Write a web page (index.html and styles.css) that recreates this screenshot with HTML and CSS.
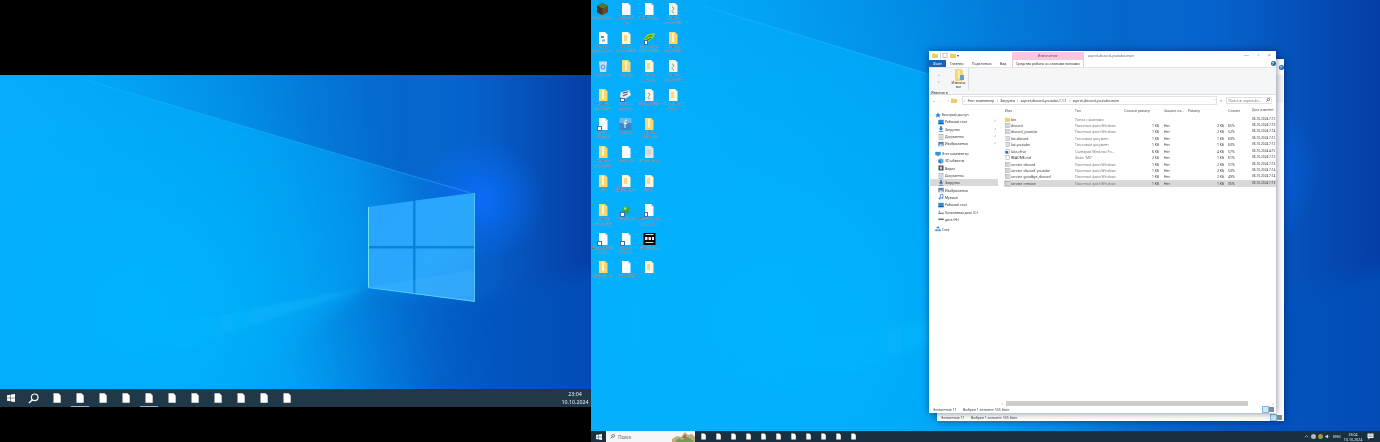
FILE: index.html
```html
<!DOCTYPE html>
<html lang="ru">
<head>
    <meta charset="UTF-8">
    <meta name="viewport" content="width=device-width, initial-scale=1.0">
    <title>Рабочие столы</title>
    <link rel="stylesheet" href="styles.css">
</head>
<body>
    <svg class="defs" width="0" height="0">
        <defs>
            <linearGradient id="g-base" x1="0" y1="0" x2="1" y2="0">
                <stop offset="0" stop-color="#07acfb"/>
                <stop offset="0.4" stop-color="#009df2"/>
                <stop offset="0.6" stop-color="#0488e6"/>
                <stop offset="0.78" stop-color="#0665cf"/>
                <stop offset="1" stop-color="#053ea6"/>
            </linearGradient>
            <radialGradient id="g-cyan" gradientUnits="userSpaceOnUse" cx="150" cy="235" r="300">
                <stop offset="0" stop-color="#00b6ff" stop-opacity="0.9"/>
                <stop offset="1" stop-color="#00b6ff" stop-opacity="0"/>
            </radialGradient>
            <radialGradient id="g-glow" gradientUnits="userSpaceOnUse" cx="482" cy="125" r="62">
                <stop offset="0" stop-color="#0a6cf6" stop-opacity="1"/>
                <stop offset="1" stop-color="#0a6cf6" stop-opacity="0"/>
            </radialGradient>
            <linearGradient id="g-upper" gradientUnits="userSpaceOnUse" x1="84" y1="0" x2="510" y2="0">
                <stop offset="0" stop-color="#0560c8" stop-opacity="0"/>
                <stop offset="0.4" stop-color="#0560c8" stop-opacity="0.35"/>
                <stop offset="0.75" stop-color="#0560c8" stop-opacity="0.75"/>
                <stop offset="1" stop-color="#0560c8" stop-opacity="0"/>
            </linearGradient>
            <linearGradient id="g-lower" gradientUnits="userSpaceOnUse" x1="300" y1="314" x2="500" y2="225">
                <stop offset="0" stop-color="#0552bc" stop-opacity="0"/>
                <stop offset="1" stop-color="#0552bc" stop-opacity="0.7"/>
            </linearGradient>
            <linearGradient id="g-beam" gradientUnits="userSpaceOnUse" x1="100" y1="0" x2="368" y2="0">
                <stop offset="0" stop-color="#19c3ff" stop-opacity="0"/>
                <stop offset="1" stop-color="#19c3ff" stop-opacity="0.4"/>
            </linearGradient>
            <linearGradient id="g-pane" gradientUnits="userSpaceOnUse" x1="368" y1="120" x2="475" y2="225">
                <stop offset="0" stop-color="#2aa4ff"/>
                <stop offset="0.6" stop-color="#2aa8fc"/>
                <stop offset="1" stop-color="#2c9df5"/>
            </linearGradient>
            <filter id="f-soft" filterUnits="userSpaceOnUse" x="-50" y="-50" width="700" height="420">
                <feGaussianBlur stdDeviation="7"/>
            </filter>
            <filter id="f-beam" filterUnits="userSpaceOnUse" x="-50" y="-50" width="700" height="420">
                <feGaussianBlur stdDeviation="2.500"/>
            </filter>
            <symbol id="wall" viewBox="0 0 591 314" preserveAspectRatio="none">
                <rect width="591" height="314" fill="url(#g-base)"/>
                <rect width="591" height="314" fill="url(#g-cyan)"/>
                <polygon points="84,4 470,118 510,118 510,-10 84,-10" fill="url(#g-upper)"/>
                <polygon points="200,330 368,212 470,227 620,190 620,330" fill="url(#g-lower)" filter="url(#f-soft)"/>
                <rect width="591" height="314" fill="url(#g-glow)"/>
                <polygon points="84,4 470,117 470,118.500 84,5" fill="#27b3ff" opacity="0.4"/>
                <polygon points="368,212 100,262 190,272" fill="url(#g-beam)" filter="url(#f-beam)"/>
                <polygon points="368,132 475,117.700 475,226.700 368,212" fill="#0c82dc"/>
                <g fill="url(#g-pane)">
                    <polygon points="368,132 413,126 413,171 368,171"/>
                    <polygon points="415.500,125.500 475,117.700 475,171 415.500,171"/>
                    <polygon points="368,173.500 413,173.500 413,218.500 368,212"/>
                    <polygon points="415.500,173.500 475,173.500 475,226.700 415.500,219"/>
                </g>
                <polygon points="368,212 475,195 475,226.700 415.500,219" fill="#4fc3ff" opacity="0.18"/>
                <polygon points="368,132 369,132 369,212 368,212" fill="#6be4ff"/>
                <polygon points="368,212 475,226 475,227 368,213" fill="#63d8ff" opacity="0.8"/>
                <polygon points="474,118 475,118 475,227 474,227" fill="#5cc8ff" opacity="0.8"/>
            </symbol>
            <symbol id="tb-doc" viewBox="0 0 8 10">
                <path d="M0.500 0.300H5.500L7.700 2.500V9.700H0.500Z" fill="#fff"/>
            </symbol>
            <symbol id="i-doc" viewBox="0 0 10 12">
                <path d="M1 0H7L9.500 2.500V12H1Z" fill="#fdfdfd"/>
                <path d="M7 0V2.500H9.500Z" fill="#cfd8e0"/>
            </symbol>
            <symbol id="i-pale" viewBox="0 0 10 12">
                <path d="M1 0H7L9.500 2.500V12H1Z" fill="#fff6d8"/>
                <rect x="3" y="3" width="3" height="6" fill="#f3d98a"/>
            </symbol>
            <symbol id="i-yellow" viewBox="0 0 10 12">
                <path d="M1 0H7L9.500 2.500V12H1Z" fill="#f6d873"/>
                <rect x="4" y="1" width="2" height="9" fill="#fff4c8"/>
            </symbol>
            <symbol id="i-pic" viewBox="0 0 10 12">
                <path d="M1 0H7L9.500 2.500V12H1Z" fill="#f9f2df"/>
                <path d="M4 4C6 4 6 6 5 7S3 9 6 10" stroke="#6b9fcf" fill="none"/>
            </symbol>
            <symbol id="i-setup" viewBox="0 0 10 12">
                <path d="M1 0H7L9.500 2.500V12H1Z" fill="#fbfdff"/>
                <rect x="3" y="4" width="3" height="2" fill="#4f9be0"/>
                <rect x="4" y="7.500" width="3" height="2" fill="#7db4e6"/>
            </symbol>
            <symbol id="i-gray" viewBox="0 0 10 12">
                <path d="M1 0H7L9.500 2.500V12H1Z" fill="#dfe3e6"/>
                <path d="M3 4H7M3 6H7M3 8H7" stroke="#b5bcc2" stroke-width="0.800"/>
            </symbol>
            <symbol id="i-mine" viewBox="0 0 12 12">
                <path d="M6 0L11.500 2.800V9.200L6 12L0.500 9.200V2.800Z" fill="#6b4a2c"/>
                <path d="M6 0L11.500 2.800L6 5.600L0.500 2.800Z" fill="#4d7a33"/>
                <path d="M6 5.600V12L0.500 9.200V2.800Z" fill="#4b3320"/>
            </symbol>
            <symbol id="i-green" viewBox="0 0 14 12">
                <path d="M1 7L5 2L13 1L11 6L5 10Z" fill="#9bd32c"/>
                <path d="M3 7L6 4L10 3.500M4 8.500L9 6" stroke="#1d6a17" fill="none"/>
            </symbol>
            <symbol id="i-bin" viewBox="0 0 10 12">
                <path d="M1 1.500H9L8 12H2Z" fill="#c9dff0"/>
                <circle cx="5" cy="7" r="2" fill="none" stroke="#3f8fd0"/>
            </symbol>
            <symbol id="i-pad" viewBox="0 0 14 12">
                <path d="M2 3L11 0.500L13 6L5 11L1 8Z" fill="#e8eaee"/>
                <path d="M4 4L10 2.500M4 7L9 5" stroke="#555c66" stroke-width="1.200"/>
            </symbol>
            <symbol id="i-f" viewBox="0 0 12 12">
                <rect width="12" height="12" fill="#3d86c9"/>
                <rect width="12" height="5" fill="#7ab4e4"/>
                <path d="M7.500 2C5.500 2 5.500 3.500 5.500 5V10M4 5.500H7.500" stroke="#eef7ff" fill="none"/>
            </symbol>
            <symbol id="i-ball" viewBox="0 0 10 10">
                <circle cx="5" cy="5" r="3.600" fill="#3da53a"/>
                <circle cx="4.200" cy="3.600" r="1.300" fill="#a4e27e"/>
            </symbol>
            <symbol id="i-black" viewBox="0 0 12 12">
                <rect width="12" height="12" fill="#050505"/>
                <rect x="1.500" y="4" width="2.500" height="3" fill="#e8e8e8"/>
                <rect x="5" y="4" width="2.500" height="3" fill="#e8e8e8"/>
                <rect x="8.500" y="4" width="2" height="3" fill="#e8e8e8"/>
                <path d="M2 1.500H10M2 9.500H10" stroke="#d8d8d8"/>
            </symbol>
            <symbol id="f-folder" viewBox="0 0 6 5">
                <path d="M0 0.500H2.400L3 1.100H6V5H0Z" fill="#f1cd68"/>
            </symbol>
            <symbol id="f-bat" viewBox="0 0 6 5">
                <rect x="0.300" y="0.300" width="5.400" height="4.400" fill="#f4f5f6" stroke="#8a9198" stroke-width="0.500"/>
                <path d="M1 1.800H5M1 3.200H5" stroke="#8d9aa5" stroke-width="0.600"/>
            </symbol>
            <symbol id="f-txt" viewBox="0 0 6 5">
                <rect x="1" y="0.200" width="4" height="4.600" fill="#fff" stroke="#8a9198" stroke-width="0.500"/>
                <path d="M1.800 1.500H4.200M1.800 2.600H4.200M1.800 3.700H4.200" stroke="#6e9bc4" stroke-width="0.400"/>
            </symbol>
            <symbol id="f-ps" viewBox="0 0 6 5">
                <rect x="1" y="0.200" width="4" height="4.600" fill="#fff" stroke="#8a9198" stroke-width="0.500"/>
                <rect x="0.500" y="2" width="3" height="2.600" fill="#2f6fb3"/>
            </symbol>
            <symbol id="f-blank" viewBox="0 0 6 5">
                <rect x="1" y="0.200" width="4" height="4.600" fill="#fff" stroke="#8a9198" stroke-width="0.500"/>
            </symbol>
            <symbol id="n-star" viewBox="0 0 6 6">
                <path d="M3 0.300L3.800 2.200L5.800 2.400L4.300 3.700L4.800 5.700L3 4.600L1.200 5.700L1.700 3.700L0.200 2.400L2.200 2.200Z" fill="#2f7fd0"/>
            </symbol>
            <symbol id="n-desk" viewBox="0 0 6 6">
                <rect x="0.300" y="0.800" width="5.400" height="4.400" fill="#2f8ad8"/>
                <rect x="0.300" y="4.200" width="5.400" height="1" fill="#145a9c"/>
            </symbol>
            <symbol id="n-down" viewBox="0 0 6 6">
                <path d="M2 0.300H4V2.500H5.500L3 4.700L0.500 2.500H2Z" fill="#2f80cf"/>
                <rect x="0.800" y="5" width="4.400" height="0.800" fill="#5d7f9e"/>
            </symbol>
            <symbol id="n-doc" viewBox="0 0 6 6">
                <rect x="1" y="0.300" width="4" height="5.400" fill="#f4f6f8" stroke="#7f8a94" stroke-width="0.500"/>
                <path d="M2 2H4M2 3H4M2 4H4" stroke="#8a97a2" stroke-width="0.400"/>
            </symbol>
            <symbol id="n-pic" viewBox="0 0 6 6">
                <rect x="0.300" y="0.800" width="5.400" height="4.400" fill="#5f87ad"/>
                <path d="M0.800 4.800L2.500 2.800L3.800 4L4.500 3.300L5.300 4.800Z" fill="#dceaf5"/>
            </symbol>
            <symbol id="n-pc" viewBox="0 0 7 6">
                <rect x="0.300" y="0.500" width="6.400" height="3.800" fill="#2b97df"/>
                <rect x="2" y="4.500" width="3" height="1" fill="#6d8599"/>
            </symbol>
            <symbol id="n-cube" viewBox="0 0 6 6">
                <path d="M3 0.300L5.500 1.500V4.500L3 5.700L0.500 4.500V1.500Z" fill="#5ab0e6"/>
                <path d="M3 2.800V5.700L0.500 4.500V1.500Z" fill="#2d82c3"/>
            </symbol>
            <symbol id="n-video" viewBox="0 0 6 6">
                <rect x="0.500" y="0.500" width="5" height="5" fill="#3a424a"/>
                <rect x="1.800" y="1.500" width="2.400" height="3" fill="#c6ccd2"/>
            </symbol>
            <symbol id="n-music" viewBox="0 0 6 6">
                <path d="M2.300 4.300V0.800L5 0.300V3.600" stroke="#2e7ec7" stroke-width="0.700" fill="none"/>
                <circle cx="1.600" cy="4.500" r="0.900" fill="#2e7ec7"/>
                <circle cx="4.300" cy="3.900" r="0.900" fill="#2e7ec7"/>
            </symbol>
            <symbol id="n-disk" viewBox="0 0 7 6">
                <path d="M1 0.800L2.500 2.500L1 4Z" fill="#3b93d9"/>
                <rect x="0.300" y="3.800" width="6.400" height="1.600" fill="#7d8a95"/>
            </symbol>
            <symbol id="n-drive" viewBox="0 0 7 6">
                <rect x="0.300" y="2.500" width="6.400" height="1.500" fill="#545c64"/>
            </symbol>
            <symbol id="n-net" viewBox="0 0 7 6">
                <rect x="2" y="0.300" width="3" height="2" fill="#2f8ad8"/>
                <rect x="0.300" y="3.500" width="2.800" height="2" fill="#2f8ad8"/>
                <rect x="3.900" y="3.500" width="2.800" height="2" fill="#2f8ad8"/>
            </symbol>
        </defs>
    </svg>

    <div class="stage">
        <section class="screen screen-left">
            <div class="desk desk-left">
                <svg class="wallpaper"><use href="#wall"/></svg>
            </div>
            <div class="taskbar taskbar-big">
                <div class="tb-start">
                    <svg viewBox="0 0 8 8" width="8" height="8"><path d="M0 1.200L3.500 0.700V3.800H0ZM4 0.600L8 0V3.800H4ZM0 4.200H3.500V7.300L0 6.800ZM4 4.200H8V8L4 7.400Z" fill="#fff"/></svg>
                </div>
                <div class="tb-search">
                    <svg viewBox="0 0 12 12" width="11" height="11"><circle cx="7.300" cy="4.700" r="3.600" fill="none" stroke="#fff" stroke-width="1.300"/><path d="M4.800 7.300L1 11" stroke="#fff" stroke-width="1.500"/></svg>
                </div>
                <div class="tb-item"><svg><use href="#tb-doc"/></svg></div>
                <div class="tb-item is-open"><svg><use href="#tb-doc"/></svg></div>
                <div class="tb-item"><svg><use href="#tb-doc"/></svg></div>
                <div class="tb-item"><svg><use href="#tb-doc"/></svg></div>
                <div class="tb-item is-open"><svg><use href="#tb-doc"/></svg></div>
                <div class="tb-item"><svg><use href="#tb-doc"/></svg></div>
                <div class="tb-item"><svg><use href="#tb-doc"/></svg></div>
                <div class="tb-item"><svg><use href="#tb-doc"/></svg></div>
                <div class="tb-item"><svg><use href="#tb-doc"/></svg></div>
                <div class="tb-item"><svg><use href="#tb-doc"/></svg></div>
                <div class="tb-item"><svg><use href="#tb-doc"/></svg></div>
                <div class="tb-clock">
                    <span>23:04</span>
                    <span>10.10.2024</span>
                </div>
            </div>
        </section>

        <section class="screen screen-right">
            <div class="desk desk-right">
                <svg class="wallpaper"><use href="#wall"/></svg>

                <div class="icons">
                    <div class="icon"><svg class="big"><use href="#i-mine"/></svg><span>Скрафтинг</span></div>
                    <div class="icon"><svg><use href="#i-doc"/></svg><span>Рабочий ф...</span></div>
                    <div class="icon"><svg><use href="#i-doc"/></svg><span>Новый д...</span></div>
                    <div class="icon"><svg><use href="#i-pic"/></svg><span>Новая папка (3)</span></div>

                    <div class="icon"><svg><use href="#i-setup"/></svg><span>Новый документ...</span></div>
                    <div class="icon"><svg><use href="#i-pale"/></svg><span>Новая папка (15)</span></div>
                    <div class="icon sc"><svg class="big"><use href="#i-green"/></svg><span>Tlauncher Cube 2021</span></div>
                    <div class="icon"><svg><use href="#i-yellow"/></svg><span>Новая папка (6)</span></div>

                    <div class="icon"><svg><use href="#i-bin"/></svg><span>Корзина</span></div>
                    <div class="icon"><svg><use href="#i-yellow"/></svg><span>ноутбук</span></div>
                    <div class="icon"><svg><use href="#i-pale"/></svg><span>Новая папка</span></div>
                    <div class="icon"><svg><use href="#i-pic"/></svg><span>Новая папка (2)</span></div>

                    <div class="icon"><svg><use href="#i-yellow"/></svg><span>Новая папка (4)</span></div>
                    <div class="icon sc"><svg class="big"><use href="#i-pad"/></svg><span>Отчёт - кратко</span></div>
                    <div class="icon"><svg><use href="#i-pic"/></svg><span>Diary 2023</span></div>
                    <div class="icon"><svg><use href="#i-pale"/></svg><span>Текстовый файл</span></div>

                    <div class="icon sc"><svg><use href="#i-doc"/></svg><span>Сеть Discord</span></div>
                    <div class="icon"><svg class="big"><use href="#i-f"/></svg><span>Paint.F</span></div>
                    <div class="icon icon-end"><svg><use href="#i-yellow"/></svg><span>Новая папка (5)</span></div>

                    <div class="icon"><svg><use href="#i-yellow"/></svg><span>Новая папка (7)</span></div>
                    <div class="icon"><svg><use href="#i-doc"/></svg><span>Файл 32</span></div>
                    <div class="icon icon-end"><svg><use href="#i-gray"/></svg><span>Диспетчер</span></div>

                    <div class="icon"><svg><use href="#i-yellow"/></svg><span>12</span></div>
                    <div class="icon"><svg><use href="#i-pale"/></svg><span>ДИП-Н.doc</span></div>
                    <div class="icon icon-end"><svg><use href="#i-pale"/></svg><span>Софт</span></div>

                    <div class="icon"><svg><use href="#i-yellow"/></svg><span>Новая папка (8)</span></div>
                    <div class="icon sc"><svg class="small"><use href="#i-ball"/></svg><span>BlueStack</span></div>
                    <div class="icon sc icon-end"><svg><use href="#i-doc"/></svg><span>Мессенджер Telegram</span></div>

                    <div class="icon sc"><svg><use href="#i-doc"/></svg><span>Adobe Flash Player</span></div>
                    <div class="icon sc"><svg><use href="#i-doc"/></svg><span>Steam Games</span></div>
                    <div class="icon icon-end"><svg class="big"><use href="#i-black"/></svg><span>Bandicam</span></div>

                    <div class="icon"><svg><use href="#i-yellow"/></svg><span>CubeCraft</span></div>
                    <div class="icon"><svg><use href="#i-doc"/></svg><span>Kara-Rk21</span></div>
                    <div class="icon icon-end"><svg><use href="#i-pale"/></svg><span>1</span></div>
                </div>

                <!-- second explorer window, only its edge is visible -->
                <div class="window window-back">
                    <div class="back-top"><span class="help">?</span></div>
                    <div class="back-ribbon"></div>
                    <div class="back-fill"></div>
                    <div class="status">
                        <span class="status-count">Элементов: 11</span>
                        <span>Выбран 1 элемент: 555 байт</span>
                        <span class="status-views"><i class="on"></i><i></i></span>
                    </div>
                </div>

                <div class="window window-front">
                    <div class="titlebar">
                        <div class="qat">
                            <svg viewBox="0 0 6 5" width="6" height="5"><use href="#f-folder"/></svg>
                            <i class="qat-sep"></i>
                            <svg viewBox="0 0 6 5" width="6" height="5"><use href="#f-blank"/></svg>
                            <svg viewBox="0 0 6 5" width="6" height="5"><use href="#f-folder"/></svg>
                            <span class="qat-arrow">▾</span>
                        </div>
                        <div class="tool-title">Извлечение</div>
                        <div class="win-title">zapret-discord-youtube-main</div>
                        <div class="win-btns"><span>—</span><span>▫</span><span>×</span></div>
                    </div>
                    <div class="tabs">
                        <span class="tab tab-file">Файл</span>
                        <span class="tab tab-home">Главная</span>
                        <span class="tab tab-share">Поделиться</span>
                        <span class="tab tab-view">Вид</span>
                        <span class="tab tab-tools">Средства работы со сжатыми папками</span>
                        <span class="tabs-end"><span class="caret">˄</span><span class="help">?</span></span>
                    </div>
                    <div class="ribbon">
                        <div class="ribbon-group">
                            <div class="ribbon-small">
                                <span class="arrow-up">▴</span>
                                <span class="arrow-up">▾</span>
                            </div>
                            <div class="ribbon-big">
                                <svg viewBox="0 0 10 12" width="10" height="12"><path d="M1 0H7L9 2V12H1Z" fill="#f5d672"/><rect x="4" y="1" width="1.500" height="8" fill="#fff3c2"/><rect x="6" y="6" width="4" height="5" fill="#5f9fd6"/></svg>
                                <span>Извлечь<br>все</span>
                            </div>
                        </div>
                        <div class="ribbon-label">Извлечь в</div>
                    </div>
                    <div class="addr">
                        <div class="nav">
                            <span>←</span>
                            <span class="dim">→</span>
                            <span class="dim">˅</span>
                            <span>↑</span>
                            <svg viewBox="0 0 6 5" width="6" height="5"><use href="#f-folder"/></svg>
                        </div>
                        <div class="path">
                            <span>›</span><span>Этот компьютер</span>
                            <span>›</span><span>Загрузки</span>
                            <span>›</span><span>zapret-discord-youtube-1.1.1</span>
                            <span>›</span><span>zapret-discord-youtube-main</span>
                            <span class="path-end">˅</span>
                        </div>
                        <div class="refresh">↻</div>
                        <div class="search">
                            <span>Поиск в: zapret-dis...</span>
                            <svg viewBox="0 0 6 6" width="4" height="4"><circle cx="3.800" cy="2.200" r="1.700" fill="none" stroke="#444"/><path d="M2.600 3.400L0.500 5.500" stroke="#444"/></svg>
                        </div>
                    </div>
                    <div class="main">
                        <nav class="sidebar">
                            <div class="nav-row top"><svg><use href="#n-star"/></svg>Быстрый доступ</div>
                            <div class="nav-row"><svg><use href="#n-desk"/></svg>Рабочий стол<b>✓</b></div>
                            <div class="nav-row"><svg><use href="#n-down"/></svg>Загрузки<b>✓</b></div>
                            <div class="nav-row"><svg><use href="#n-doc"/></svg>Документы<b>✓</b></div>
                            <div class="nav-row"><svg><use href="#n-pic"/></svg>Изображения<b>✓</b></div>
                            <div class="nav-row top group"><svg><use href="#n-pc"/></svg>Этот компьютер</div>
                            <div class="nav-row"><svg><use href="#n-cube"/></svg>3D-объекты</div>
                            <div class="nav-row"><svg><use href="#n-video"/></svg>Видео</div>
                            <div class="nav-row"><svg><use href="#n-doc"/></svg>Документы</div>
                            <div class="nav-row selected"><svg><use href="#n-down"/></svg>Загрузки</div>
                            <div class="nav-row"><svg><use href="#n-pic"/></svg>Изображения</div>
                            <div class="nav-row"><svg><use href="#n-music"/></svg>Музыка</div>
                            <div class="nav-row"><svg><use href="#n-desk"/></svg>Рабочий стол</div>
                            <div class="nav-row"><svg><use href="#n-disk"/></svg>Локальный диск (C:)</div>
                            <div class="nav-row"><svg><use href="#n-drive"/></svg>диск (H:)</div>
                            <div class="nav-row top group"><svg><use href="#n-net"/></svg>Сеть</div>
                        </nav>
                        <div class="list">
                            <div class="row head">
                                <span class="c-name">Имя</span>
                                <span>Тип</span>
                                <span class="c-hsize">Сжатый размер</span>
                                <span>Защита па...</span>
                                <span>Размер</span>
                                <span>Сжатие</span>
                                <span>Дата изменен</span>
                            </div>
                            <div class="row"><span class="c-name"><svg><use href="#f-folder"/></svg>bin</span><span class="c-type">Папка с файлами</span><span></span><span></span><span></span><span></span><span>06.10.2024 7:12</span></div>
                            <div class="row"><span class="c-name"><svg><use href="#f-bat"/></svg>discord</span><span class="c-type">Пакетный файл Windows</span><span class="c-csize">1 КБ</span><span>Нет</span><span class="c-size">2 КБ</span><span>65%</span><span>06.10.2024 7:13</span></div>
                            <div class="row"><span class="c-name"><svg><use href="#f-bat"/></svg>discord_youtube</span><span class="c-type">Пакетный файл Windows</span><span class="c-csize">1 КБ</span><span>Нет</span><span class="c-size">2 КБ</span><span>52%</span><span>06.10.2024 7:14</span></div>
                            <div class="row"><span class="c-name"><svg><use href="#f-txt"/></svg>list-discord</span><span class="c-type">Текстовый документ</span><span class="c-csize">1 КБ</span><span>Нет</span><span class="c-size">1 КБ</span><span>63%</span><span>06.10.2024 7:12</span></div>
                            <div class="row"><span class="c-name"><svg><use href="#f-txt"/></svg>list-youtube</span><span class="c-type">Текстовый документ</span><span class="c-csize">1 КБ</span><span>Нет</span><span class="c-size">1 КБ</span><span>63%</span><span>06.10.2024 7:12</span></div>
                            <div class="row"><span class="c-name"><svg><use href="#f-ps"/></svg>lukr-cfrse</span><span class="c-type">Сценарий Windows Po...</span><span class="c-csize">6 КБ</span><span>Нет</span><span class="c-size">4 КБ</span><span>57%</span><span>06.10.2024 4:15</span></div>
                            <div class="row"><span class="c-name"><svg><use href="#f-blank"/></svg>README.md</span><span class="c-type">Файл "MD"</span><span class="c-csize">2 КБ</span><span>Нет</span><span class="c-size">1 КБ</span><span>61%</span><span>06.10.2024 7:12</span></div>
                            <div class="row"><span class="c-name"><svg><use href="#f-bat"/></svg>service_discord</span><span class="c-type">Пакетный файл Windows</span><span class="c-csize">1 КБ</span><span>Нет</span><span class="c-size">2 КБ</span><span>51%</span><span>06.10.2024 7:13</span></div>
                            <div class="row"><span class="c-name"><svg><use href="#f-bat"/></svg>service_discord_youtube</span><span class="c-type">Пакетный файл Windows</span><span class="c-csize">1 КБ</span><span>Нет</span><span class="c-size">2 КБ</span><span>53%</span><span>06.10.2024 7:14</span></div>
                            <div class="row"><span class="c-name"><svg><use href="#f-bat"/></svg>service_goodbye_discord</span><span class="c-type">Пакетный файл Windows</span><span class="c-csize">1 КБ</span><span>Нет</span><span class="c-size">2 КБ</span><span>49%</span><span>06.10.2024 7:14</span></div>
                            <div class="row selected"><span class="c-name"><svg><use href="#f-bat"/></svg>service_remove</span><span class="c-type">Пакетный файл Windows</span><span class="c-csize">1 КБ</span><span>Нет</span><span class="c-size">1 КБ</span><span>35%</span><span>06.10.2024 7:13</span></div>
                        </div>
                    </div>
                    <div class="hscroll">
                        <span class="hs-arrow">‹</span>
                        <div class="hs-thumb"></div>
                        <span class="hs-arrow">›</span>
                    </div>
                    <div class="status">
                        <span class="status-count">Элементов: 11</span>
                        <span>Выбран 1 элемент: 555 байт</span>
                        <span class="status-views"><i class="on"></i><i></i></span>
                    </div>
                </div>
            </div>

            <div class="taskbar taskbar-small">
                <div class="ts-start">
                    <svg viewBox="0 0 8 8" width="6" height="6"><path d="M0 1.200L3.500 0.700V3.800H0ZM4 0.600L8 0V3.800H4ZM0 4.200H3.500V7.300L0 6.800ZM4 4.200H8V8L4 7.400Z" fill="#fff"/></svg>
                </div>
                <div class="ts-search">
                    <svg viewBox="0 0 6 6" width="5" height="5"><circle cx="3.800" cy="2.200" r="1.700" fill="none" stroke="#333" stroke-width="0.700"/><path d="M2.600 3.400L0.500 5.500" stroke="#333" stroke-width="0.700"/></svg>
                    <span>Поиск</span>
                    <svg class="ts-pic" viewBox="0 0 23 11" width="23" height="11" preserveAspectRatio="none">
                        <path d="M0 11V8L5 5L9 6L13 1L16 4L20 3L23 6V11Z" fill="#c4ad7c"/>
                        <path d="M3 11L7 7L10 9L15 6L19 8L22 11Z" fill="#6f9a58"/>
                        <path d="M10 7L13 3L15 7Z" fill="#a2703f"/>
                    </svg>
                </div>
                <div class="ts-item"><svg><use href="#tb-doc"/></svg></div>
                <div class="ts-item"><svg><use href="#tb-doc"/></svg></div>
                <div class="ts-item"><svg><use href="#tb-doc"/></svg></div>
                <div class="ts-item"><svg><use href="#tb-doc"/></svg></div>
                <div class="ts-item"><svg><use href="#tb-doc"/></svg></div>
                <div class="ts-item"><svg><use href="#tb-doc"/></svg></div>
                <div class="ts-item"><svg><use href="#tb-doc"/></svg></div>
                <div class="ts-item"><svg><use href="#tb-doc"/></svg></div>
                <div class="ts-item"><svg><use href="#tb-doc"/></svg></div>
                <div class="ts-item"><svg><use href="#tb-doc"/></svg></div>
                <div class="ts-item"><svg><use href="#tb-doc"/></svg></div>
                <div class="tray">
                    <svg viewBox="0 0 5 5" width="5" height="5"><path d="M0.800 3.300L2.500 1.600L4.200 3.300" fill="none" stroke="#e4e8ec" stroke-width="0.600"/></svg>
                    <i class="tray-dot gray"></i>
                    <i class="tray-dot orange"></i>
                    <svg viewBox="0 0 6 6" width="5" height="5"><path d="M0.500 2H2L3.500 0.700V5.300L2 4H0.500Z" fill="#e4e8ec"/><path d="M4.300 2C5 2.600 5 3.400 4.300 4" stroke="#e4e8ec" stroke-width="0.500" fill="none"/></svg>
                    <span class="tray-lang">ENG</span>
                    <div class="tray-clock">
                        <span>23:04</span>
                        <span>10.10.2024</span>
                    </div>
                    <svg class="tray-note" viewBox="0 0 7 7" width="7" height="7"><path d="M0.500 0.500H6.500V5H3L1.500 6.500V5H0.500Z" fill="#f2f4f6"/><path d="M1.500 2H5.500M1.500 3.500H5.500" stroke="#52626f" stroke-width="0.500"/></svg>
                </div>
            </div>
        </section>
    </div>
</body>
</html>
```

FILE: styles.css
```css
body, html {
    margin: 0;
    padding: 0;
    width: 100%;
    height: 100%;
    background-color: #000;
    overflow: hidden;
}
body {
    font-family: "Noto Sans", "Liberation Sans", Arial, sans-serif;
}
.defs {
    position: absolute;
}
.stage {
    display: flex;
    width: 1380px;
    height: 442px;
}
.screen {
    display: flex;
    flex-direction: column;
}
.screen-left {
    width: 591px;
    padding-top: 75px;
    box-sizing: border-box;
}
.screen-right {
    flex: 1;
}
.desk {
    position: relative;
    overflow: hidden;
}
.desk-left {
    height: 314px;
}
.desk-right {
    flex: 1;
}
.wallpaper {
    position: absolute;
    inset: 0;
    width: 100%;
    height: 100%;
}

/* big taskbar, left screen */
.taskbar {
    display: flex;
    align-items: center;
    flex-shrink: 0;
}
.taskbar-big {
    height: 18px;
    background: #213848;
    color: #e6edf2;
}
.tb-start {
    display: flex;
    justify-content: center;
    width: 22px;
}
.tb-search {
    display: flex;
    justify-content: center;
    width: 23px;
}
.tb-item {
    position: relative;
    display: flex;
    align-items: center;
    justify-content: center;
    width: 23.1px;
    height: 18px;
}
.tb-item svg {
    width: 8px;
    height: 10px;
}
.tb-item.is-open::after {
    content: "";
    position: absolute;
    left: 3px;
    right: 2px;
    bottom: 0;
    height: 1px;
    background: #8fb4cc;
}
.tb-clock {
    display: flex;
    flex-direction: column;
    align-items: center;
    gap: 2.5px;
    margin-left: auto;
    padding-right: 2.4px;
    font-size: 5.3px;
    line-height: 6px;
    filter: blur(0.3px);
}

/* desktop icons */
.icons {
    position: relative;
    display: grid;
    grid-template-columns: repeat(4, 23.3px);
    grid-auto-rows: 28.7px;
    padding-top: 3px;
    filter: blur(0.35px);
}
.icon {
    position: relative;
    display: flex;
    flex-direction: column;
    align-items: center;
    color: #0a2750;
    font-size: 3.9px;
    line-height: 4.7px;
    text-align: center;
    text-shadow: 0 0 0.6px #f2fbff, 0 0 1px #f2fbff;
    overflow: hidden;
}
.icon svg {
    width: 10px;
    height: 12px;
    flex-shrink: 0;
}
.icon svg.big {
    width: 13px;
    height: 12px;
}
.icon svg.small {
    height: 10px;
    margin: 1px 0;
}
.icon span {
    width: 23px;
    margin-top: 1px;
}
.icon-end {
    grid-column-end: span 2;
    width: 23.3px;
}
.icon.sc::after {
    content: "";
    position: absolute;
    left: 6px;
    top: 8.5px;
    width: 2.5px;
    height: 2.5px;
    background: #fff;
    border: 0.5px solid #3a70b0;
}

/* explorer windows */
.window {
    position: absolute;
    display: flex;
    flex-direction: column;
    width: 347px;
    height: 362px;
    background: #fff;
    box-shadow: 0 0 7px rgba(0, 20, 60, 0.55);
    color: #333;
    font-size: 3.4px;
    line-height: 5px;
}
.window-back {
    left: 346px;
    top: 59px;
    filter: blur(0.3px);
}
.window-front {
    left: 338px;
    top: 51px;
    filter: blur(0.3px);
}
.back-top {
    display: flex;
    justify-content: flex-end;
    align-items: center;
    height: 16px;
    padding-right: 0.5px;
}
.back-ribbon {
    height: 28px;
    background: #f5f6f7;
}
.back-fill {
    flex: 1;
}
.titlebar {
    display: flex;
    height: 9px;
    flex-shrink: 0;
}
.qat {
    display: flex;
    align-items: center;
    gap: 1.5px;
    width: 82.5px;
    padding-left: 3px;
    box-sizing: border-box;
}
.qat-sep {
    width: 1px;
    height: 6px;
    background: #d6d6d6;
}
.qat-arrow {
    font-size: 3.5px;
}
.tool-title {
    width: 72.5px;
    margin-top: 1px;
    background: #fcc5da;
    text-align: center;
    line-height: 8px;
    color: #6a5a62;
}
.win-title {
    flex: 1;
    padding-left: 4px;
    line-height: 9px;
    color: #666;
}
.win-btns {
    display: flex;
    gap: 8.5px;
    padding-right: 5px;
    line-height: 8px;
    color: #8a8a8a;
    font-size: 5.5px;
}
.tabs {
    position: relative;
    display: flex;
    align-items: center;
    height: 7px;
    flex-shrink: 0;
}
.tab {
    line-height: 7px;
}
.tab-file {
    width: 17px;
    background: #1a63b8;
    color: #fff;
    text-align: center;
}
.tab-home {
    margin-left: 4px;
    width: 22px;
}
.tab-share {
    width: 28px;
}
.tab-view {
    width: 11.5px;
}
.tab-tools {
    width: 72.5px;
    box-sizing: border-box;
    border-left: 0.5px solid #e8c8d4;
    border-right: 0.5px solid #e8c8d4;
    text-align: center;
    white-space: nowrap;
}
.tabs-end {
    display: flex;
    align-items: center;
    gap: 3px;
    margin-left: auto;
    padding-right: 0.5px;
}
.caret {
    color: #777;
}
.help {
    display: block;
    width: 5px;
    height: 5px;
    border-radius: 50%;
    background: #1d6fb5;
    color: #fff;
    font-size: 4px;
    font-weight: 700;
    line-height: 5px;
    text-align: center;
}
.ribbon {
    display: flex;
    flex-direction: column;
    height: 28px;
    flex-shrink: 0;
    background: #f5f6f7;
    border-top: 0.5px solid #e3e4e6;
    border-bottom: 0.5px solid #dcdcdc;
    box-sizing: border-box;
}
.ribbon-group {
    display: flex;
    flex: 1;
    width: 39px;
    border-right: 0.5px solid #dcdde0;
}
.ribbon-small {
    display: flex;
    flex-direction: column;
    align-items: center;
    width: 20px;
    padding-top: 5px;
    gap: 3px;
    color: #9a9a9a;
    line-height: 4px;
}
.ribbon-big {
    display: flex;
    flex-direction: column;
    align-items: center;
    width: 19px;
    text-align: center;
    padding-top: 1px;
    line-height: 4.4px;
}
.ribbon-label {
    padding: 0 0 1px 2px;
    line-height: 5px;
}
.addr {
    display: flex;
    align-items: center;
    height: 10px;
    flex-shrink: 0;
}
.nav {
    display: flex;
    align-items: center;
    gap: 2.5px;
    width: 33px;
    padding-left: 3px;
    box-sizing: border-box;
    color: #555;
}
.nav .dim {
    color: #b8b8b8;
}
.path {
    display: flex;
    align-items: center;
    gap: 2.5px;
    flex: 1;
    height: 7px;
    padding: 0 1px;
    border: 0.5px solid #e2e2e2;
    white-space: nowrap;
}
.path-end {
    margin-left: auto;
}
.refresh {
    width: 9px;
    text-align: center;
    color: #666;
}
.search {
    display: flex;
    align-items: center;
    justify-content: space-between;
    width: 46px;
    height: 7px;
    margin-right: 4px;
    padding: 0 1.5px;
    box-sizing: border-box;
    border: 0.5px solid #e2e2e2;
    color: #777;
    white-space: nowrap;
}
.main {
    display: flex;
    flex: 1;
    min-height: 0;
}
.sidebar {
    width: 75px;
    flex-shrink: 0;
    padding: 6px 0 0 1px;
    box-sizing: border-box;
}
.nav-row {
    position: relative;
    display: flex;
    align-items: center;
    gap: 1px;
    width: 68px;
    height: 7.3px;
    padding-left: 8px;
    box-sizing: border-box;
    white-space: nowrap;
}
.nav-row svg {
    width: 6px;
    height: 6px;
    flex-shrink: 0;
}
.nav-row.top {
    padding-left: 5px;
}
.nav-row.group {
    margin-top: 2.5px;
}
.nav-row.selected {
    background: #d9d9d9;
}
.nav-row b {
    margin-left: auto;
    margin-right: 1px;
    font-size: 3px;
    font-weight: 400;
    color: #666;
}
.list {
    flex: 1;
    min-width: 0;
}
.row {
    display: grid;
    grid-template-columns: 71px 49px 40px 24px 40px 24px 1fr;
    height: 6.45px;
    align-items: center;
    white-space: nowrap;
}
.row span:last-child {
    font-size: 3.2px;
}
.row.head {
    height: 10.8px;
    color: #555;
}
.row.selected {
    background: #d9d9d9;
}
.c-name {
    display: flex;
    align-items: center;
    gap: 0.5px;
    padding-left: 1px;
}
.c-name svg {
    width: 5.5px;
    height: 5px;
    flex-shrink: 0;
}
.c-type {
    color: #7a7a7a;
}
.c-csize {
    padding-left: 28px;
}
.c-size {
    padding-right: 4px;
    text-align: right;
}
.hscroll {
    display: flex;
    align-items: center;
    gap: 1.5px;
    height: 6px;
    margin-left: 71px;
    padding-right: 1px;
    flex-shrink: 0;
    color: #444;
}
.hs-arrow {
    width: 4px;
    text-align: center;
}
.hs-thumb {
    width: 242px;
    height: 5px;
    background: #cdcdcd;
}
.hs-arrow:last-child {
    margin-left: auto;
}
.status {
    display: flex;
    align-items: center;
    height: 7px;
    flex-shrink: 0;
    padding-left: 4px;
    color: #444;
    white-space: nowrap;
}
.status-count {
    width: 30px;
}
.status-views {
    display: flex;
    gap: 1px;
    margin-left: auto;
    padding-right: 2px;
}
.status-views i {
    width: 5px;
    height: 5px;
    background: #7f8c96;
}
.status-views i.on {
    background: #cfe6f5;
    outline: 0.5px solid #7fb8dd;
}

/* small taskbar, right screen */
.taskbar-small {
    height: 11px;
    background: #18303f;
    color: #e6edf2;
}
.ts-start {
    display: flex;
    align-items: center;
    justify-content: center;
    width: 15px;
}
.ts-search {
    display: flex;
    align-items: center;
    gap: 3px;
    width: 89px;
    height: 11px;
    padding-left: 4px;
    box-sizing: border-box;
    background: #f4f5f6;
    color: #5c6268;
    font-size: 4.4px;
}
.ts-pic {
    margin-left: auto;
}
.ts-item {
    display: flex;
    align-items: center;
    justify-content: center;
    width: 15.1px;
}
.ts-item:nth-child(3) {
    margin-left: 0.5px;
}
.ts-item svg {
    width: 5px;
    height: 7px;
}
.tray {
    display: flex;
    align-items: center;
    gap: 2px;
    margin-left: auto;
    padding-right: 6.5px;
    font-size: 3.6px;
    filter: blur(0.2px);
}
.tray-dot {
    display: block;
    width: 5px;
    height: 5px;
    border-radius: 50%;
}
.tray-dot.gray {
    background: #aeb9c2;
}
.tray-dot.orange {
    background: radial-gradient(circle at 60% 70%, #54b948 30%, #e8732a 60%);
}
.tray-lang {
    width: 8px;
    margin-left: 1px;
    text-align: center;
}
.tray-clock {
    display: flex;
    flex-direction: column;
    align-items: center;
    width: 18px;
    margin-left: 1px;
    line-height: 5px;
}
.tray-note {
    margin-left: 2.5px;
}
```
